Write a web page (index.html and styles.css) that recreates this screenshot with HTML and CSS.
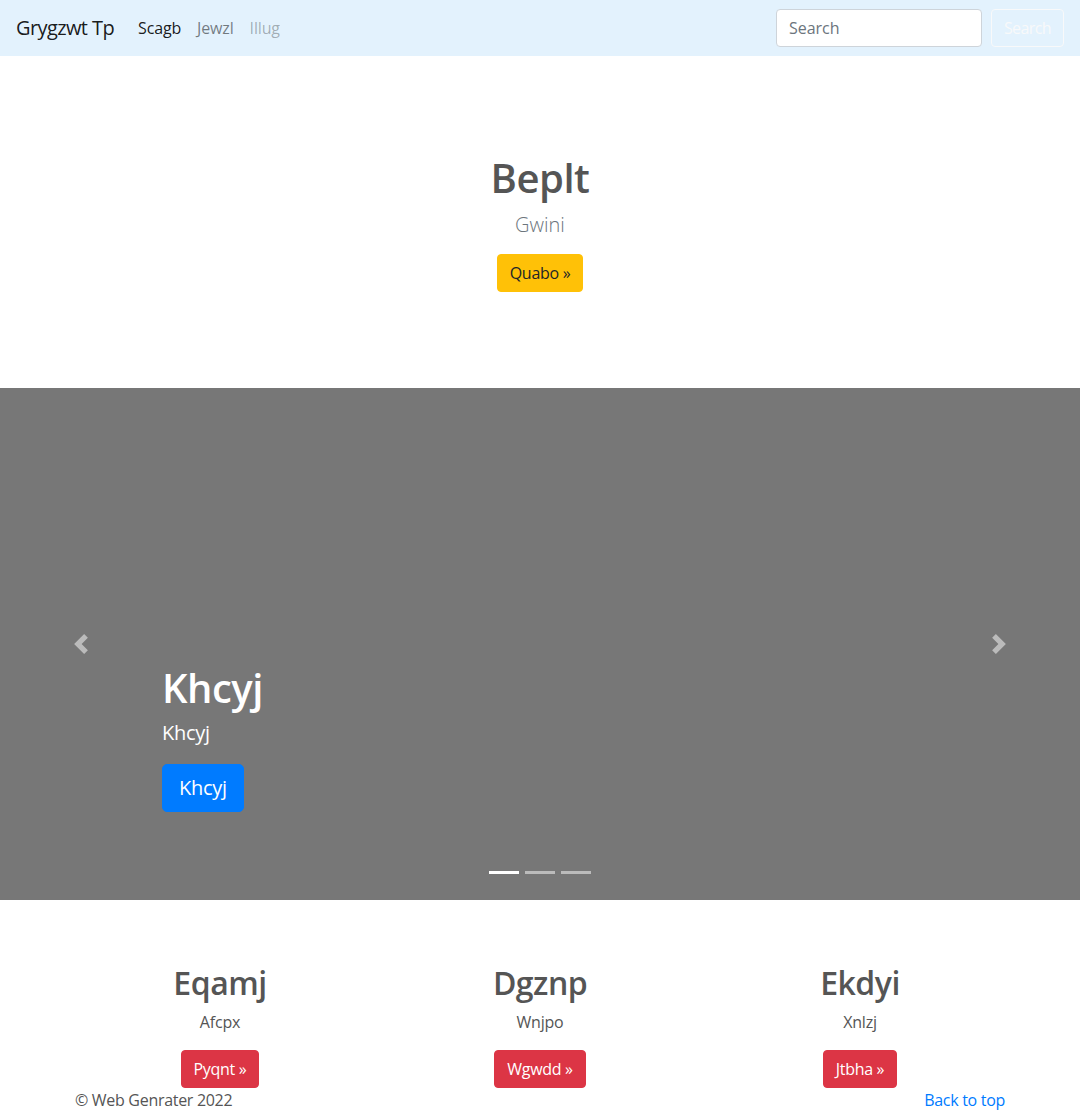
FILE: index.html
```html
<!DOCTYPE html>
<html lang="en">
<head>
<meta charset="utf-8">
<title>Grygzwt Tp</title>
<link rel="stylesheet" href="styles.css">
</head>
<body>
<nav class="navbar">
  <a class="brand" href="#">Grygzwt Tp</a>
  <ul class="nav">
    <li><a class="nav-link active" href="#">Scagb</a></li>
    <li><a class="nav-link" href="#">Jewzl</a></li>
    <li><a class="nav-link disabled" href="#">Illug</a></li>
  </ul>
  <form class="search-form">
    <input class="search-input" type="text" placeholder="Search">
    <button class="btn btn-outline-light" type="button">Search</button>
  </form>
</nav>

<section class="hero">
  <h1 class="hero-title">Beplt</h1>
  <p class="lead">Gwini</p>
  <a class="btn btn-warning" href="#">Quabo »</a>
</section>

<div class="carousel">
  <div class="carousel-item">
    <div class="carousel-caption">
      <h1 class="caption-title">Khcyj</h1>
      <p class="caption-text">Khcyj</p>
      <p class="caption-action"><a class="btn btn-lg btn-primary" href="#">Khcyj</a></p>
    </div>
  </div>
  <a class="carousel-control prev" href="#">
    <svg viewBox="0 0 8 8" width="20" height="20"><path fill="#fff" d="M5.25 0l-4 4 4 4 1.5-1.5L4.25 4l2.5-2.5L5.25 0z"/></svg>
  </a>
  <a class="carousel-control next" href="#">
    <svg viewBox="0 0 8 8" width="20" height="20"><path fill="#fff" d="M2.75 0l-1.5 1.5L3.75 4l-2.5 2.5L2.75 8l4-4-4-4z"/></svg>
  </a>
  <ol class="indicators">
    <li class="active"></li>
    <li></li>
    <li></li>
  </ol>
</div>

<div class="container marketing">
  <div class="col">
    <h2 class="col-title">Eqamj</h2>
    <p class="col-text">Afcpx</p>
    <a class="btn btn-danger" href="#">Pyqnt »</a>
  </div>
  <div class="col">
    <h2 class="col-title">Dgznp</h2>
    <p class="col-text">Wnjpo</p>
    <a class="btn btn-danger" href="#">Wgwdd »</a>
  </div>
  <div class="col">
    <h2 class="col-title">Ekdyi</h2>
    <p class="col-text">Xnlzj</p>
    <a class="btn btn-danger" href="#">Jtbha »</a>
  </div>
</div>

<footer class="container footer">
  <p class="copy">© Web Genrater 2022</p>
  <a class="back-top" href="#">Back to top</a>
</footer>
</body>
</html>
```
FILE: styles.css
```css
* { box-sizing: border-box; }
html, body { margin: 0; padding: 0; }
body {
  font-family: "Open Sans", "Noto Sans", "Liberation Sans", sans-serif;
  font-size: 16px;
  line-height: 1.5;
  color: #555;
  background: #fff;
  width: 1080px;
  overflow: hidden;
}
a { text-decoration: none; }
h1, h2, p { margin: 0; }

/* navbar */
.navbar {
  display: flex;
  align-items: center;
  height: 56px;
  padding: 8px 16px;
  background: #e3f2fd;
}
.brand {
  font-size: 20px;
  line-height: 30px;
  color: rgba(0,0,0,.9);
  margin-right: 16px;
  letter-spacing: -0.6px;
}
.nav {
  display: flex;
  list-style: none;
  margin: 0;
  padding: 0;
  flex: 1;
}
.nav-link {
  display: block;
  padding: 8px;
  line-height: 24px;
  color: rgba(0,0,0,.5);
  letter-spacing: -0.15px;
}
.nav-link.active { color: rgba(0,0,0,.9); }
.nav-link.disabled { color: rgba(0,0,0,.3); }
.search-form { display: flex; align-items: center; }
.search-input {
  width: 206px;
  height: 38px;
  padding: 6px 12px;
  font: inherit;
  color: #495057;
  border: 1px solid #ced4da;
  border-radius: 4px;
  background: #fff;
  margin-right: 9px;
}
.search-input::placeholder { color: #6c757d; }

/* buttons */
.btn {
  display: inline-block;
  font-family: inherit;
  font-size: 16px;
  line-height: 24px;
  padding: 6px 12px;
  border: 1px solid transparent;
  border-radius: 4px;
  text-align: center;
  letter-spacing: -0.3px;
}
.btn-outline-light {
  background: transparent;
  color: #f8f9fa;
  border-color: #f8f9fa;
  letter-spacing: -0.6px;
}
.btn-warning { background: #ffc107; border-color: #ffc107; color: #212529; }
.btn-danger { background: #dc3545; border-color: #dc3545; color: #fff; }
.btn-primary { background: #007bff; border-color: #007bff; color: #fff; }
.btn-lg { font-size: 20px; line-height: 30px; padding: 8px 16px; border-radius: 5px; }

/* hero */
.hero {
  padding: 98px 0 96px;
  text-align: center;
  background: #fff;
}
.hero-title {
  font-size: 40px;
  line-height: 48px;
  font-weight: 600;
  margin-bottom: 8px;
  color: #555;
  letter-spacing: -0.5px;
}
.lead {
  font-size: 20px;
  line-height: 30px;
  font-weight: 300;
  color: #6c757d;
  margin-bottom: 14px;
}

/* carousel */
.carousel {
  position: relative;
  height: 512px;
  background: #777;
  margin-bottom: 64px;
}
.carousel-item { height: 100%; }
.carousel-caption {
  position: absolute;
  left: 15%;
  right: 15%;
  bottom: 52px;
  padding: 20px 0;
  color: #fff;
}
.caption-title {
  font-size: 40px;
  line-height: 48px;
  font-weight: 600;
  margin-bottom: 6px;
  letter-spacing: -0.5px;
}
.caption-text {
  font-size: 20px;
  line-height: 30px;
  margin-bottom: 16px;
  letter-spacing: -0.3px;
}
.caption-action { margin-bottom: 16px; }
.carousel-control {
  position: absolute;
  top: 0;
  bottom: 0;
  width: 15%;
  display: flex;
  align-items: center;
  justify-content: center;
  opacity: .5;
}
.carousel-control.prev { left: 0; }
.carousel-control.next { right: 0; }
.carousel-control svg { display: block; }
.indicators {
  position: absolute;
  left: 0;
  right: 0;
  bottom: 16px;
  display: flex;
  justify-content: center;
  list-style: none;
  margin: 0;
  padding: 0;
}
.indicators li {
  width: 30px;
  height: 23px;
  margin: 0 3px;
  border-top: 10px solid transparent;
  border-bottom: 10px solid transparent;
  background: #fff;
  background-clip: padding-box;
  opacity: .5;
}
.indicators li.active { opacity: 1; }

/* marketing */
.container {
  width: 960px;
  margin: 0 auto;
  padding: 0 15px;
}
.marketing {
  display: grid;
  grid-template-columns: repeat(3, 1fr);
  padding: 0;
  text-align: center;
}
.col { padding: 0 15px; }
.col-title {
  font-size: 32px;
  line-height: 38px;
  font-weight: 600;
  margin-bottom: 8px;
  color: #555;
  letter-spacing: -0.5px;
}
.col-text {
  margin-bottom: 16px;
  color: #555;
  letter-spacing: -0.2px;
}

/* footer */
.footer {
  display: flex;
  justify-content: space-between;
  align-items: flex-start;
}
.copy { color: #555; letter-spacing: -0.3px; }
.back-top { color: #007bff; letter-spacing: -0.3px; }
```
